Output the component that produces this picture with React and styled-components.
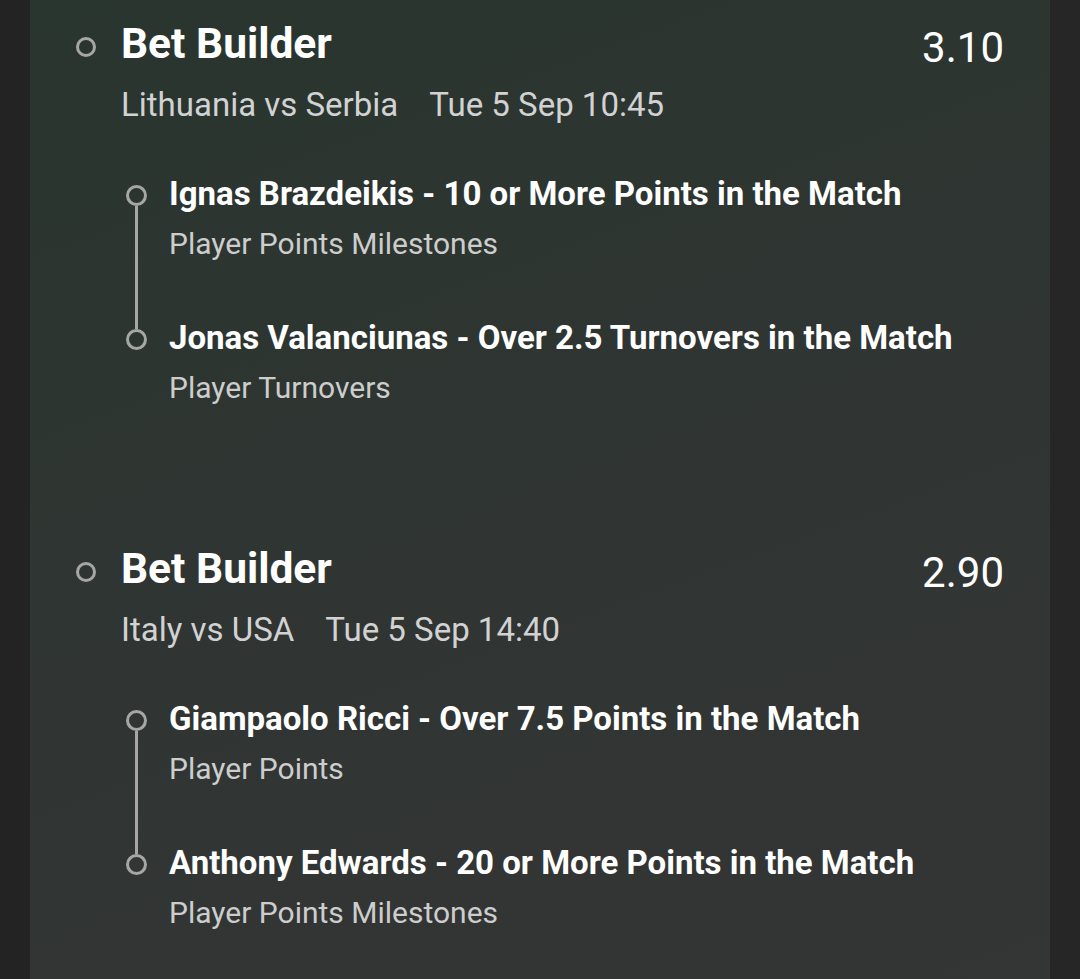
import React from 'react';
import styled, { createGlobalStyle } from 'styled-components';

const GlobalStyle = createGlobalStyle`
  html, body {
    margin: 0;
    padding: 0;
    background: #242424;
  }
  body {
    font-family: Roboto, "Noto Sans", Arial, sans-serif;
    -webkit-font-smoothing: antialiased;
  }
`;

const Page = styled.div`
  display: flex;
  justify-content: center;
  width: 1080px;
  height: 979px;
  overflow: hidden;
  background: linear-gradient(90deg, #232323 0%, #262626 100%);
`;

const Panel = styled.div`
  width: 1020px;
  height: 979px;
  box-sizing: border-box;
  padding: 18.5px 46px 0 0;
  display: flex;
  flex-direction: column;
  gap: 136.5px;
  background: linear-gradient(160deg, #29352f 0%, #2f3532 45%, #343535 100%);
`;

const Bet = styled.div`
  display: flex;
  flex-direction: column;
`;

const HeaderRow = styled.div`
  display: grid;
  grid-template-columns: 91px 1fr auto;
  align-items: start;
`;

const Marker = styled.span`
  margin: 18px 0 0 46px;
  width: 20px;
  height: 20px;
  box-sizing: border-box;
  border: 3px solid #a6a6a6;
  border-radius: 50%;
`;

const Title = styled.div`
  font-size: 42.5px;
  font-weight: 700;
  color: #ffffff;
  line-height: 50px;
`;

const Odds = styled.div`
  font-size: 42px;
  font-weight: 400;
  color: #ffffff;
  line-height: 50px;
  margin-top: 4px;
`;

const Meta = styled.div`
  display: flex;
  gap: 31px;
  margin: 12px 0 0 91px;
  font-size: 33px;
  line-height: 40px;
  color: #d2d2d2;
`;

const Legs = styled.div`
  display: flex;
  flex-direction: column;
  gap: 54px;
  margin: 49px 0 0 96px;
`;

const Leg = styled.div`
  display: grid;
  grid-template-columns: 43px 1fr;
  row-gap: 10px;
  align-items: start;
`;

const LegDot = styled.span`
  position: relative;
  margin-top: 11px;
  width: 21px;
  height: 21px;
  box-sizing: border-box;
  border: 3px solid #a6a6a6;
  border-radius: 50%;

  &::after {
    content: '';
    display: ${(p) => (p.$hasNext ? 'block' : 'none')};
    position: absolute;
    left: 6px;
    top: 18px;
    width: 3px;
    height: 123px;
    background: #a6a6a6;
  }
`;

const LegTitle = styled.div`
  font-size: 33px;
  font-weight: 700;
  color: #ffffff;
  line-height: 40px;
`;

const LegMarket = styled.div`
  grid-column: 2;
  font-size: 30px;
  line-height: 40px;
  color: #cdcdcd;
`;

const bets = [
  {
    odds: '3.10',
    match: 'Lithuania vs Serbia',
    time: 'Tue 5 Sep 10:45',
    legs: [
      { title: 'Ignas Brazdeikis - 10 or More Points in the Match', market: 'Player Points Milestones' },
      { title: 'Jonas Valanciunas - Over 2.5 Turnovers in the Match', market: 'Player Turnovers' },
    ],
  },
  {
    odds: '2.90',
    match: 'Italy vs USA',
    time: 'Tue 5 Sep 14:40',
    legs: [
      { title: 'Giampaolo Ricci - Over 7.5 Points in the Match', market: 'Player Points' },
      { title: 'Anthony Edwards - 20 or More Points in the Match', market: 'Player Points Milestones' },
    ],
  },
];

const BetCard = ({ bet }) => (
  <Bet>
    <HeaderRow>
      <Marker />
      <Title>Bet Builder</Title>
      <Odds>{bet.odds}</Odds>
    </HeaderRow>
    <Meta>
      <span>{bet.match}</span>
      <span>{bet.time}</span>
    </Meta>
    <Legs>
      {bet.legs.map((leg, i) => (
        <Leg key={leg.title}>
          <LegDot $hasNext={i < bet.legs.length - 1} />
          <LegTitle>{leg.title}</LegTitle>
          <LegMarket>{leg.market}</LegMarket>
        </Leg>
      ))}
    </Legs>
  </Bet>
);

export default function App() {
  return (
    <>
      <GlobalStyle />
      <Page>
        <Panel>
          {bets.map((bet) => (
            <BetCard key={bet.match} bet={bet} />
          ))}
        </Panel>
      </Page>
    </>
  );
}
